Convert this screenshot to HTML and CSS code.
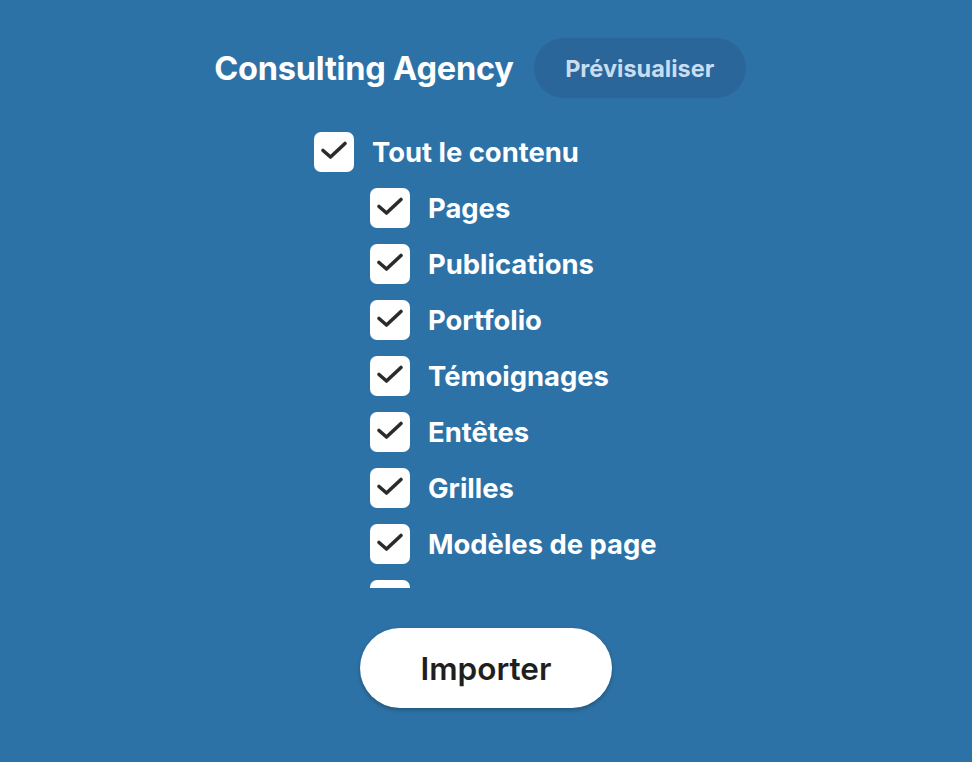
FILE: index.html
```html
<!DOCTYPE html>
<html lang="fr">
<head>
<meta charset="utf-8">
<link rel="stylesheet" href="styles.css">
</head>
<body>
<div class="page">
  <header class="head">
    <h1 class="title">Consulting Agency</h1>
    <button class="preview">Prévisualiser</button>
  </header>
  <div class="list">
    <label class="row"><span class="box"><svg viewBox="0 0 40 40"><path d="M9 18.5l7.5 6.5L31 11.5"/></svg></span><span class="lbl">Tout le contenu</span></label>
    <label class="row sub"><span class="box"><svg viewBox="0 0 40 40"><path d="M9 18.5l7.5 6.5L31 11.5"/></svg></span><span class="lbl">Pages</span></label>
    <label class="row sub"><span class="box"><svg viewBox="0 0 40 40"><path d="M9 18.5l7.5 6.5L31 11.5"/></svg></span><span class="lbl">Publications</span></label>
    <label class="row sub"><span class="box"><svg viewBox="0 0 40 40"><path d="M9 18.5l7.5 6.5L31 11.5"/></svg></span><span class="lbl">Portfolio</span></label>
    <label class="row sub"><span class="box"><svg viewBox="0 0 40 40"><path d="M9 18.5l7.5 6.5L31 11.5"/></svg></span><span class="lbl">Témoignages</span></label>
    <label class="row sub"><span class="box"><svg viewBox="0 0 40 40"><path d="M9 18.5l7.5 6.5L31 11.5"/></svg></span><span class="lbl">Entêtes</span></label>
    <label class="row sub"><span class="box"><svg viewBox="0 0 40 40"><path d="M9 18.5l7.5 6.5L31 11.5"/></svg></span><span class="lbl">Grilles</span></label>
    <label class="row sub"><span class="box"><svg viewBox="0 0 40 40"><path d="M9 18.5l7.5 6.5L31 11.5"/></svg></span><span class="lbl">Modèles de page</span></label>
    <label class="row sub"><span class="box"><svg viewBox="0 0 40 40"><path d="M9 18.5l7.5 6.5L31 11.5"/></svg></span></label>
  </div>
  <div class="foot">
    <button class="import">Importer</button>
  </div>
</div>
</body>
</html>
```

FILE: styles.css
```css
html, body {
  margin: 0;
  height: 100%;
}
body {
  background: #2d72a6;
  font-family: Inter, "Liberation Sans", Arial, sans-serif;
  color: #fff;
}
.page {
  display: flex;
  flex-direction: column;
  align-items: center;
  padding-top: 38px;
}
.head {
  display: flex;
  align-items: center;
  gap: 20px;
  padding-right: 12px;
  height: 60px;
}
.title {
  margin: 0;
  font-size: 32.5px;
  font-weight: 700;
  letter-spacing: -0.2px;
  color: #fff;
}
.preview {
  height: 60px;
  padding: 0 31.5px;
  border: none;
  border-radius: 30px;
  background: #2a669a;
  color: #c9ddf0;
  font-family: inherit;
  font-size: 23.5px;
  font-weight: 700;
}
.list {
  width: 344px;
  height: 464px;
  margin-top: 26px;
  overflow: hidden;
  display: flex;
  flex-direction: column;
}
.row {
  display: flex;
  align-items: center;
  gap: 18px;
  height: 56px;
  flex: none;
}
.row.sub {
  padding-left: 56px;
}
.box {
  width: 40px;
  height: 40px;
  border-radius: 7px;
  background: #fff;
  flex: none;
  display: flex;
}
.box svg {
  width: 40px;
  height: 40px;
}
.box path {
  fill: none;
  stroke: #2b2b2b;
  stroke-width: 3.6;
  stroke-linecap: round;
  stroke-linejoin: round;
}
.lbl {
  font-size: 27.4px;
  font-weight: 700;
  color: #fff;
  white-space: nowrap;
}
.foot {
  margin-top: 40px;
}
.import {
  width: 252px;
  height: 80px;
  border: none;
  border-radius: 40px;
  background: #fff;
  color: #1f1f1f;
  font-family: inherit;
  font-size: 31.5px;
  font-weight: 600;
  box-shadow: 0 2px 4px rgba(0, 0, 0, 0.25);
}
```
